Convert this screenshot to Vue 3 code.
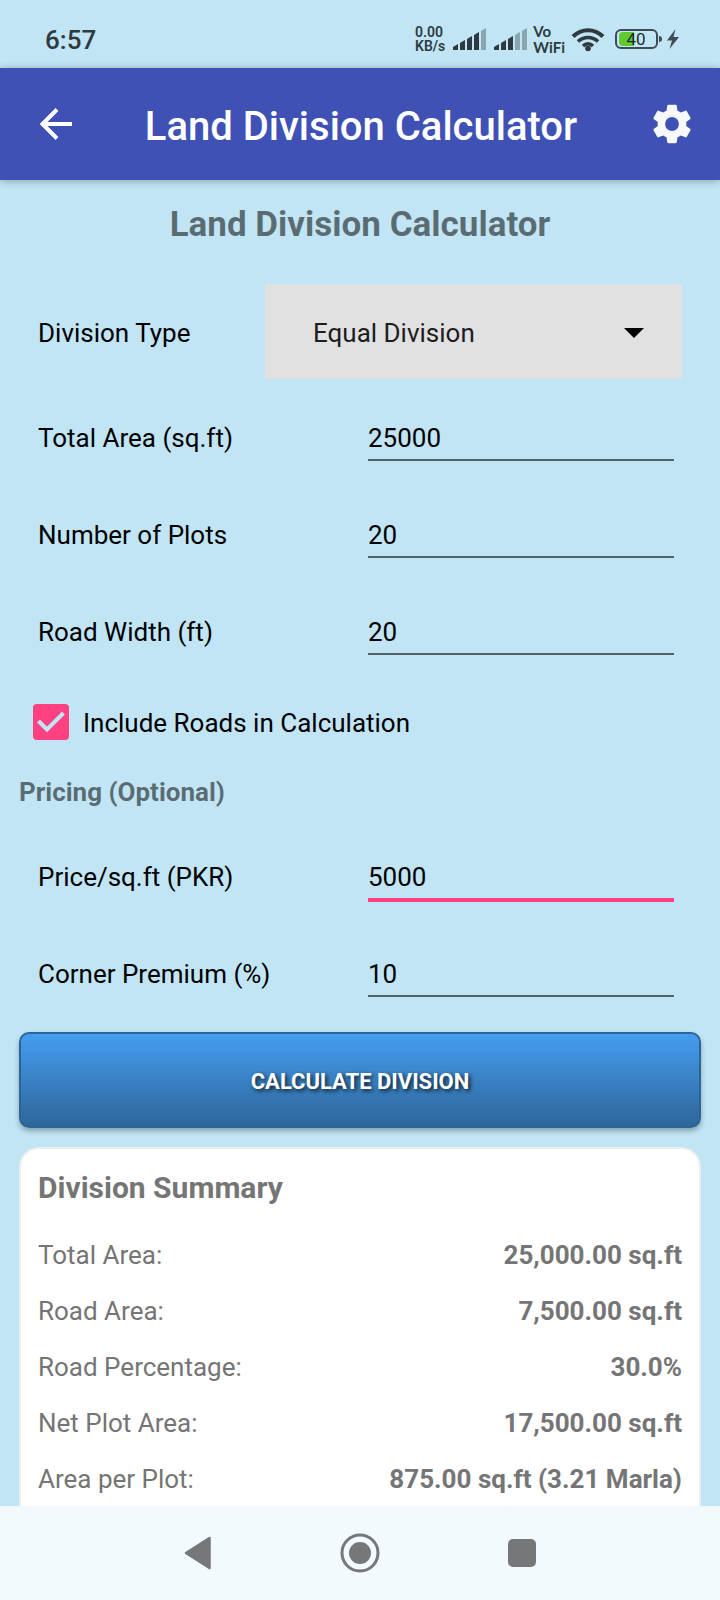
<script setup>
import { reactive, ref } from 'vue'

const divisionType = ref('equal')
const includeRoads = ref(true)
const activeField = ref('price')

const values = reactive({
  area: '25000',
  plots: '20',
  road: '20',
  price: '5000',
  corner: '10',
})

const plotFields = [
  { key: 'area', label: 'Total Area (sq.ft)' },
  { key: 'plots', label: 'Number of Plots' },
  { key: 'road', label: 'Road Width (ft)' },
]

const priceFields = [
  { key: 'price', label: 'Price/sq.ft (PKR)' },
  { key: 'corner', label: 'Corner Premium (%)' },
]

const summary = [
  { label: 'Total Area:', value: '25,000.00 sq.ft' },
  { label: 'Road Area:', value: '7,500.00 sq.ft' },
  { label: 'Road Percentage:', value: '30.0%' },
  { label: 'Net Plot Area:', value: '17,500.00 sq.ft' },
  { label: 'Area per Plot:', value: '875.00 sq.ft (3.21 Marla)' },
]

// number of lit bars per SIM
const signals = [4, 3]
const bars = [6, 10, 14, 18, 22]

// each bar has a slightly slanted top
const barPath = (i, h) => `M${i * 7} ${25 - h}L${i * 7 + 5} ${22 - h}V22H${i * 7}Z`
</script>

<template>
  <div class="screen">
    <div class="status-bar">
      <span class="clock">6:57</span>
      <div class="status-icons">
        <div class="net-speed">
          <div>0.00</div>
          <div>KB/s</div>
        </div>
        <svg v-for="(lit, s) in signals" :key="s" class="signal" width="33" height="22" viewBox="0 0 33 22">
          <path
            v-for="(h, i) in bars"
            :key="i"
            :d="barPath(i, h)"
            :fill="i < lit ? '#2e3a40' : '#8aa4b0'"
          />
        </svg>
        <div class="vowifi">
          <div>Vo</div>
          <div>WiFi</div>
        </div>
        <svg class="wifi" width="34" height="26" viewBox="0 0 34 26" fill="none" stroke="#2e3a40" stroke-width="4">
          <path d="M2 10.5C10.500 2 23.500 2 32 10.500" />
          <path d="M7 15.500C12.500 10 21.500 10 27 15.500" stroke-width="3.500" />
          <path d="M12 20C15 17 19 17 22 20" stroke-width="3.500" />
          <circle cx="17" cy="22.500" r="2.800" fill="#2e3a40" stroke="none" />
        </svg>
        <svg class="battery" width="48" height="22" viewBox="0 0 48 22">
          <rect x="1" y="2" width="41" height="18" rx="5" fill="none" stroke="#3d4c53" stroke-width="2" />
          <path d="M8 4H19V18H8Q4 18 4 14V8Q4 4 8 4Z" fill="#5fc92e" />
          <path d="M44 8Q47 8 47 11Q47 14 44 14Z" fill="#3d4c53" />
          <text x="21" y="17" text-anchor="middle" font-size="17" fill="#1f2a2e">40</text>
        </svg>
        <svg class="bolt" width="14" height="20" viewBox="0 0 14 20">
          <path d="M9.500 0L1 11.500H6L3.500 20L13 8H7.500Z" fill="#3d4c53" />
        </svg>
      </div>
    </div>

    <header class="app-bar">
      <button class="icon-btn" type="button" aria-label="Back">
        <svg width="34" height="34" viewBox="0 0 34 34" fill="none" stroke="#fff" stroke-width="4">
          <path d="M33 17H4M18 2.500L3.500 17L18 31.500" />
        </svg>
      </button>
      <h1 class="app-title">Land Division Calculator</h1>
      <button class="icon-btn" type="button" aria-label="Settings">
        <svg width="46" height="46" viewBox="0 0 24 24" fill="#f7f8fc">
          <path d="M19.430 12.980c.04-.32.07-.64.07-.98s-.03-.66-.07-.98l2.110-1.650c.19-.15.24-.42.12-.64l-2-3.460c-.12-.22-.39-.3-.61-.22l-2.490 1c-.52-.4-1.080-.73-1.690-.98l-.38-2.650C14.460 2.180 14.250 2 14 2h-4c-.25 0-.46.18-.49.42l-.38 2.650c-.61.25-1.170.59-1.690.98l-2.490-1c-.23-.09-.49 0-.61.22l-2 3.460c-.13.22-.07.49.12.64l2.110 1.650c-.04.32-.07.65-.07.98s.03.66.07.98l-2.110 1.650c-.19.15-.24.42-.12.64l2 3.460c.12.22.39.3.61.22l2.490-1c.52.4 1.080.73 1.690.98l.38 2.650c.03.24.24.42.49.42h4c.25 0 .46-.18.49-.42l.38-2.650c.61-.25 1.170-.59 1.690-.98l2.490 1c.23.09.49 0 .61-.22l2-3.460c.12-.22.07-.49-.12-.64l-2.110-1.650zM12 15.600a3.600 3.600 0 1 1 0-7.200 3.600 3.600 0 0 1 0 7.200z" />
        </svg>
      </button>
    </header>

    <main class="content">
      <h2 class="page-title">Land Division Calculator</h2>

      <form class="form" @submit.prevent>
        <div class="select-row">
          <label for="division-type">Division Type</label>
          <div class="select-wrap">
            <select id="division-type" v-model="divisionType" class="select">
              <option value="equal">Equal Division</option>
            </select>
            <svg class="caret" width="20" height="10" viewBox="0 0 20 10">
              <path d="M0 0H20L10 10Z" />
            </svg>
          </div>
        </div>

        <div v-for="field in plotFields" :key="field.key" class="field-row">
          <label :for="field.key">{{ field.label }}</label>
          <input
            :id="field.key"
            v-model="values[field.key]"
            class="text-input"
            :class="{ active: activeField === field.key }"
            type="text"
            inputmode="decimal"
            @focus="activeField = field.key"
          />
        </div>

        <label class="check-row">
          <input v-model="includeRoads" class="checkbox" type="checkbox" />
          <svg class="tick" width="36" height="36" viewBox="0 0 36 36" fill="none" stroke="#c1e5f5" stroke-width="4">
            <path d="M5.500 17L14 25.500L30.500 9" />
          </svg>
          <span class="check-label">Include Roads in Calculation</span>
        </label>

        <h3 class="section-title">Pricing (Optional)</h3>

        <div v-for="field in priceFields" :key="field.key" class="field-row">
          <label :for="field.key">{{ field.label }}</label>
          <input
            :id="field.key"
            v-model="values[field.key]"
            class="text-input"
            :class="{ active: activeField === field.key }"
            type="text"
            inputmode="decimal"
            @focus="activeField = field.key"
          />
        </div>

        <button class="calculate" type="submit">CALCULATE DIVISION</button>
      </form>

      <section class="card">
        <h3 class="card-title">Division Summary</h3>
        <table class="summary">
          <tbody>
            <tr v-for="row in summary" :key="row.label">
              <th scope="row">{{ row.label }}</th>
              <td>{{ row.value }}</td>
            </tr>
          </tbody>
        </table>
      </section>
    </main>

    <nav class="nav-bar">
      <button class="nav-btn" type="button" aria-label="Back">
        <svg width="28" height="34" viewBox="0 0 28 34">
          <path d="M25.500 2L2 17L25.500 32Z" fill="#757779" stroke="#757779" stroke-width="2.500" stroke-linejoin="round" />
        </svg>
      </button>
      <button class="nav-btn" type="button" aria-label="Home">
        <svg width="40" height="40" viewBox="0 0 40 40">
          <circle cx="20" cy="20" r="18" fill="none" stroke="#757779" stroke-width="3" />
          <circle cx="20" cy="20" r="11" fill="#757779" />
        </svg>
      </button>
      <button class="nav-btn" type="button" aria-label="Recent apps">
        <svg width="30" height="30" viewBox="0 0 30 30">
          <rect x="1" y="1" width="28" height="28" rx="5" fill="#757779" />
        </svg>
      </button>
    </nav>
  </div>
</template>

<style>
body {
  margin: 0;
  background: #c1e5f5;
}
</style>

<style scoped>
.screen {
  display: flex;
  flex-direction: column;
  min-height: 100vh;
  background: #c1e5f5;
  color: #000;
  font-family: Roboto, sans-serif;
  font-size: 26px;
  line-height: 30px;
}

button,
input,
select {
  font: inherit;
  color: inherit;
  margin: 0;
  border: 0;
  border-radius: 0;
  box-sizing: border-box;
  outline: none;
}

h1,
h2,
h3 {
  margin: 0;
}

svg {
  display: block;
  flex-shrink: 0;
}

/* Status bar */
.status-bar {
  display: flex;
  align-items: center;
  justify-content: space-between;
  height: 68px;
  padding: 10px 40px 0 45px;
  box-sizing: border-box;
  color: #2e3a40;
}

.clock {
  padding-top: 2px;
  font-weight: 500;
}

.status-icons {
  display: flex;
  align-items: center;
}

.net-speed {
  font-size: 14px;
  font-weight: 600;
  line-height: 14px;
}

.signal {
  margin-left: 8px;
}

.vowifi {
  margin-left: 6px;
  font-family: Lato, sans-serif;
  font-size: 15px;
  font-weight: 700;
  line-height: 16px;
}

.wifi {
  margin-left: 6px;
}

.battery {
  margin-left: 10px;
}

.bolt {
  margin-left: 3px;
}

/* App bar */
.app-bar {
  display: flex;
  align-items: center;
  justify-content: space-between;
  height: 112px;
  padding: 0 25px 0 39px;
  box-sizing: border-box;
  background: #3f51b5;
  box-shadow: 0 1px 8px rgba(0, 0, 0, 0.3);
}

.icon-btn {
  display: flex;
  padding: 0;
  background: none;
}

.app-title {
  padding-top: 6px;
  color: #fff;
  font-size: 40px;
  font-weight: 500;
  line-height: 48px;
}

/* Form */
.content {
  display: flex;
  flex-direction: column;
  flex: 1;
  padding: 23px 19px 0;
}

.page-title {
  margin-bottom: 37px;
  color: rgba(0, 0, 0, 0.54);
  font-size: 35px;
  font-weight: 700;
  line-height: 44px;
  text-align: center;
}

.select-row {
  display: flex;
  align-items: center;
  margin: 0 19px 10px;
}

.select-row label {
  flex: 0 0 227px;
  padding-top: 2px;
}

.select-wrap {
  position: relative;
  flex: 1;
}

.select {
  display: block;
  width: 100%;
  height: 95px;
  padding: 2px 80px 0 48px;
  appearance: none;
  background: #e1e1e1;
  color: #1d1d1d;
}

.caret {
  position: absolute;
  top: 44px;
  right: 38px;
  pointer-events: none;
}

.field-row {
  display: grid;
  grid-template-columns: 1fr 1fr;
  padding: 26px 19px 25px;
}

.field-row label {
  padding-top: 8px;
}

.text-input {
  min-width: 0;
  height: 46px;
  margin: 0 8px;
  padding: 8px 0 6px;
  background: none;
  border-bottom: 2px solid #536267;
}

.text-input.active {
  border-color: #ff4081;
  box-shadow: 0 2px 0 #ff4081;
}

.check-row {
  position: relative;
  display: flex;
  align-items: center;
  gap: 14px;
  margin: 24px 14px 36px;
}

.checkbox {
  width: 36px;
  height: 36px;
  appearance: none;
  border: 4px solid #536267;
  border-radius: 4px;
}

.checkbox:checked {
  border-color: #ff4081;
  background: #ff4081;
}

.tick {
  position: absolute;
  top: 0;
  left: 0;
  pointer-events: none;
}

.check-label {
  padding-top: 2px;
}

.section-title {
  margin-bottom: 20px;
  color: rgba(0, 0, 0, 0.54);
  font-size: 26px;
  font-weight: 700;
  line-height: 32px;
}

.calculate {
  width: 100%;
  height: 96px;
  margin: 10px 0 19px;
  padding: 4px 0 0;
  border: 2px solid #2d6599;
  border-radius: 10px;
  background: linear-gradient(#449def, #2f6699);
  box-shadow: 0 3px 5px rgba(0, 0, 0, 0.3);
  color: #fff;
  font-size: 22px;
  font-weight: 700;
  text-shadow: 2px 2px 4px rgba(0, 0, 0, 0.8);
}

/* Summary card, runs under the navigation bar */
.card {
  flex: 1;
  padding: 21px 17px 0;
  border: 2px solid #eee;
  border-bottom: 0;
  border-radius: 20px 20px 0 0;
  background: #fff;
  color: #757575;
}

.card-title {
  margin-bottom: 20px;
  font-size: 30px;
  font-weight: 700;
  line-height: 36px;
}

.summary {
  width: 100%;
  border-collapse: collapse;
}

.summary th,
.summary td {
  padding: 14px 0 12px;
}

.summary th {
  font-weight: 400;
  text-align: left;
}

.summary td {
  font-weight: 700;
  text-align: right;
}

/* System navigation */
.nav-bar {
  display: flex;
  align-items: center;
  justify-content: center;
  gap: 100px;
  height: 94px;
  background: #f2fafd;
}

.nav-btn {
  display: flex;
  align-items: center;
  justify-content: center;
  width: 62px;
  height: 62px;
  padding: 0;
  background: none;
}
</style>
